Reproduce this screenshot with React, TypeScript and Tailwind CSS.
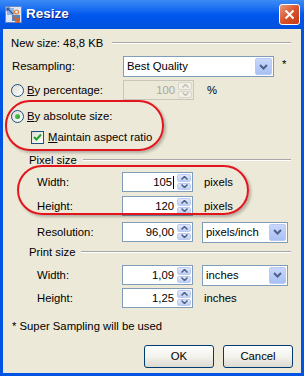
import type { ReactNode } from "react";

const font = { fontFamily: '"Liberation Sans", Arial, sans-serif' };

function Spin({ value, disabled, caret }: { value: string; disabled?: boolean; caret?: boolean }) {
  return (
    <div
      className={`flex h-[20px] w-[71px] items-stretch border ${
        disabled ? "border-[#c9c7ba] bg-[#ece9d8] text-[#aca899]" : "border-[#7f9db9] bg-white text-black"
      }`}
    >
      <div className="flex flex-1 items-center justify-end pr-[2px]">
        {value}
        {caret && <span className="ml-[1px] h-[13px] w-px bg-black" />}
      </div>
      <div className="flex w-[16px] flex-col gap-px p-px">
        {["up", "down"].map((d) => (
          <div
            key={d}
            className={`flex flex-1 items-center justify-center rounded-[2px] border ${
              disabled
                ? "border-[#d8d6cc] bg-[#f1efe6]"
                : "border-[#bccbf1] bg-gradient-to-b from-[#dfe8fd] to-[#bdcdf5]"
            }`}
          >
            <svg width="7" height="4" viewBox="0 0 7 4">
              <path
                d={d === "up" ? "M0.5 3.5 L3.5 0.5 L6.5 3.5" : "M0.5 0.5 L3.5 3.5 L6.5 0.5"}
                fill="none"
                stroke={disabled ? "#c3c1b6" : "#4d6185"}
                strokeWidth="1.5"
              />
            </svg>
          </div>
        ))}
      </div>
    </div>
  );
}

function Select({ value, width }: { value: string; width: string }) {
  return (
    <div className={`flex h-[21px] ${width} items-center border border-[#7f9db9] bg-white p-px`}>
      <span className="flex-1 pl-[2px]">{value}</span>
      <div className="flex h-[17px] w-[17px] items-center justify-center rounded-[2px] border border-[#b9c9ef] bg-gradient-to-b from-[#c8d7fc] to-[#a9c0f4]">
        <svg width="9" height="6" viewBox="0 0 9 6">
          <path d="M1 1 L4.5 4.5 L8 1" fill="none" stroke="#4d6185" strokeWidth="2" />
        </svg>
      </div>
    </div>
  );
}

function Radio({ checked }: { checked?: boolean }) {
  return (
    <div className="flex h-[13px] w-[13px] shrink-0 items-center justify-center rounded-full border border-[#1c5180] bg-gradient-to-br from-[#dcdbd3] to-white">
      {checked && <div className="h-[5px] w-[5px] rounded-full bg-gradient-to-br from-[#5dd35d] to-[#1a9a1a]" />}
    </div>
  );
}

function Header({ text }: { text: string }) {
  return (
    <div className="flex h-[16px] items-center pl-[26px] pr-[10px]">
      <span>{text}</span>
      <div className="ml-[6px] flex-1 border-t border-b border-t-[#a7a6aa] border-b-white" />
    </div>
  );
}

function Row({ label, children, mt }: { label: string; children: ReactNode; mt: string }) {
  return (
    <div className={`flex h-[20px] items-center ${mt}`}>
      <span className="w-[119px] pl-[34px]">{label}</span>
      {children}
    </div>
  );
}

export default function App() {
  return (
    <div className="relative h-[376px] w-[304px] overflow-hidden bg-[#0054e3] text-[11.3px] text-black" style={font}>
      {/* title bar */}
      <div className="flex h-[29px] items-center bg-gradient-to-b from-[#3d8bf5] via-[#0058ee] to-[#0050dc] pl-[5px] pr-[4px]">
        <svg width="17" height="17" viewBox="0 0 17 17">
          <rect x="0.5" y="0.5" width="16" height="16" fill="#dfe8f8" stroke="#6b86b8" />
          <rect x="2" y="2" width="7" height="7" fill="#8fb1e6" />
          <path d="M2 2 L8 8 M5 2 L2 2 L2 5" stroke="#2a4f94" strokeWidth="1.2" fill="none" />
          <circle cx="11.5" cy="6" r="2" fill="none" stroke="#e57b2d" strokeWidth="1.2" />
          <rect x="7" y="9" width="8" height="6" fill="#5e7fb4" />
          <path d="M9 11 L14 16 M14 12 L14 16 L10 16" stroke="#e05a1c" strokeWidth="1.6" fill="none" />
        </svg>
        <span className="ml-[4px] flex-1 text-[13.5px] font-bold text-white [text-shadow:1px_1px_0_#0a1f80]">Resize</span>
        <div className="flex h-[21px] w-[21px] items-center justify-center rounded-[3px] border border-white bg-gradient-to-br from-[#e9987a] via-[#d9532a] to-[#c43a12]">
          <svg width="11" height="11" viewBox="0 0 11 11">
            <path d="M1.5 1.5 L9.5 9.5 M9.5 1.5 L1.5 9.5" stroke="white" strokeWidth="2" />
          </svg>
        </div>
      </div>

      {/* client area */}
      <div className="mx-[3px] flex h-[344px] flex-col bg-[#ece9d8] pt-[4px]">
        <div className="flex h-[20px] items-center pl-[8px] pr-[10px]">
          <span>New size: 48,8 KB</span>
          <div className="ml-[9px] flex-1 border-t border-b border-t-[#a7a6aa] border-b-white" />
        </div>

        <div className="mt-[3px] flex h-[21px] items-center">
          <span className="w-[120px] pl-[9px]">Resampling:</span>
          <Select value="Best Quality" width="w-[151px]" />
          <span className="ml-[8px] self-start">*</span>
        </div>

        <div className="mt-[3px] flex h-[20px] items-center">
          <div className="flex w-[120px] items-center pl-[8px]">
            <Radio />
            <span className="ml-[3px]">
              <u>B</u>y percentage:
            </span>
          </div>
          <Spin value="100" disabled />
          <span className="ml-[13px]">%</span>
        </div>

        <div className="mt-[6px] flex h-[20px] items-center pl-[8px]">
          <Radio checked />
          <span className="ml-[3px]">
            <u>B</u>y absolute size:
          </span>
        </div>

        <div className="mt-px flex h-[20px] items-center pl-[28px]">
          <div className="flex h-[13px] w-[13px] items-center justify-center border border-[#1c5180] bg-gradient-to-br from-[#dcdbd3] to-white">
            <svg width="9" height="9" viewBox="0 0 9 9">
              <path d="M1 4 L3.5 6.5 L8 1.5" fill="none" stroke="#21a121" strokeWidth="2" />
            </svg>
          </div>
          <span className="ml-[4px]">
            <u>M</u>aintain aspect ratio
          </span>
        </div>

        <div className="mt-[5px]">
          <Header text="Pixel size" />
        </div>

        <Row label="Width:" mt="mt-[4px]">
          <Spin value="105" caret />
          <span className="ml-[11px]">pixels</span>
        </Row>
        <Row label="Height:" mt="mt-[4px]">
          <Spin value="120" />
          <span className="ml-[11px]">pixels</span>
        </Row>
        <Row label="Resolution:" mt="mt-[6px]">
          <Spin value="96,00" />
          <div className="ml-[9px]">
            <Select value="pixels/inch" width="w-[86px]" />
          </div>
        </Row>

        <div className="mt-[2px]">
          <Header text="Print size" />
        </div>

        <Row label="Width:" mt="mt-[5px]">
          <Spin value="1,09" />
          <div className="ml-[9px]">
            <Select value="inches" width="w-[86px]" />
          </div>
        </Row>
        <Row label="Height:" mt="mt-[3px]">
          <Spin value="1,25" />
          <span className="ml-[11px]">inches</span>
        </Row>

        <div className="mt-[8px] flex h-[20px] items-center pl-[9px]">* Super Sampling will be used</div>

        <div className="mt-[9px] flex justify-end gap-[9px] pr-[8px]">
          {["OK", "Cancel"].map((b) => (
            <div
              key={b}
              className="flex h-[23px] w-[70px] items-center justify-center rounded-[3px] border border-[#003c74] bg-gradient-to-b from-white via-[#f3f2ec] to-[#dcdad0]"
            >
              {b}
            </div>
          ))}
        </div>
      </div>

      {/* red annotation marks */}
      <div className="absolute left-[5px] top-[100px] h-[51px] w-[159px] rounded-[25px] border-2 border-[#e4141c] shadow-[2px_2px_3px_rgba(0,0,0,0.25)]" />
      <div className="absolute left-[17px] top-[165px] h-[50px] w-[232px] rounded-[25px] border-2 border-[#e4141c] shadow-[2px_2px_3px_rgba(0,0,0,0.25)]" />
    </div>
  );
}
